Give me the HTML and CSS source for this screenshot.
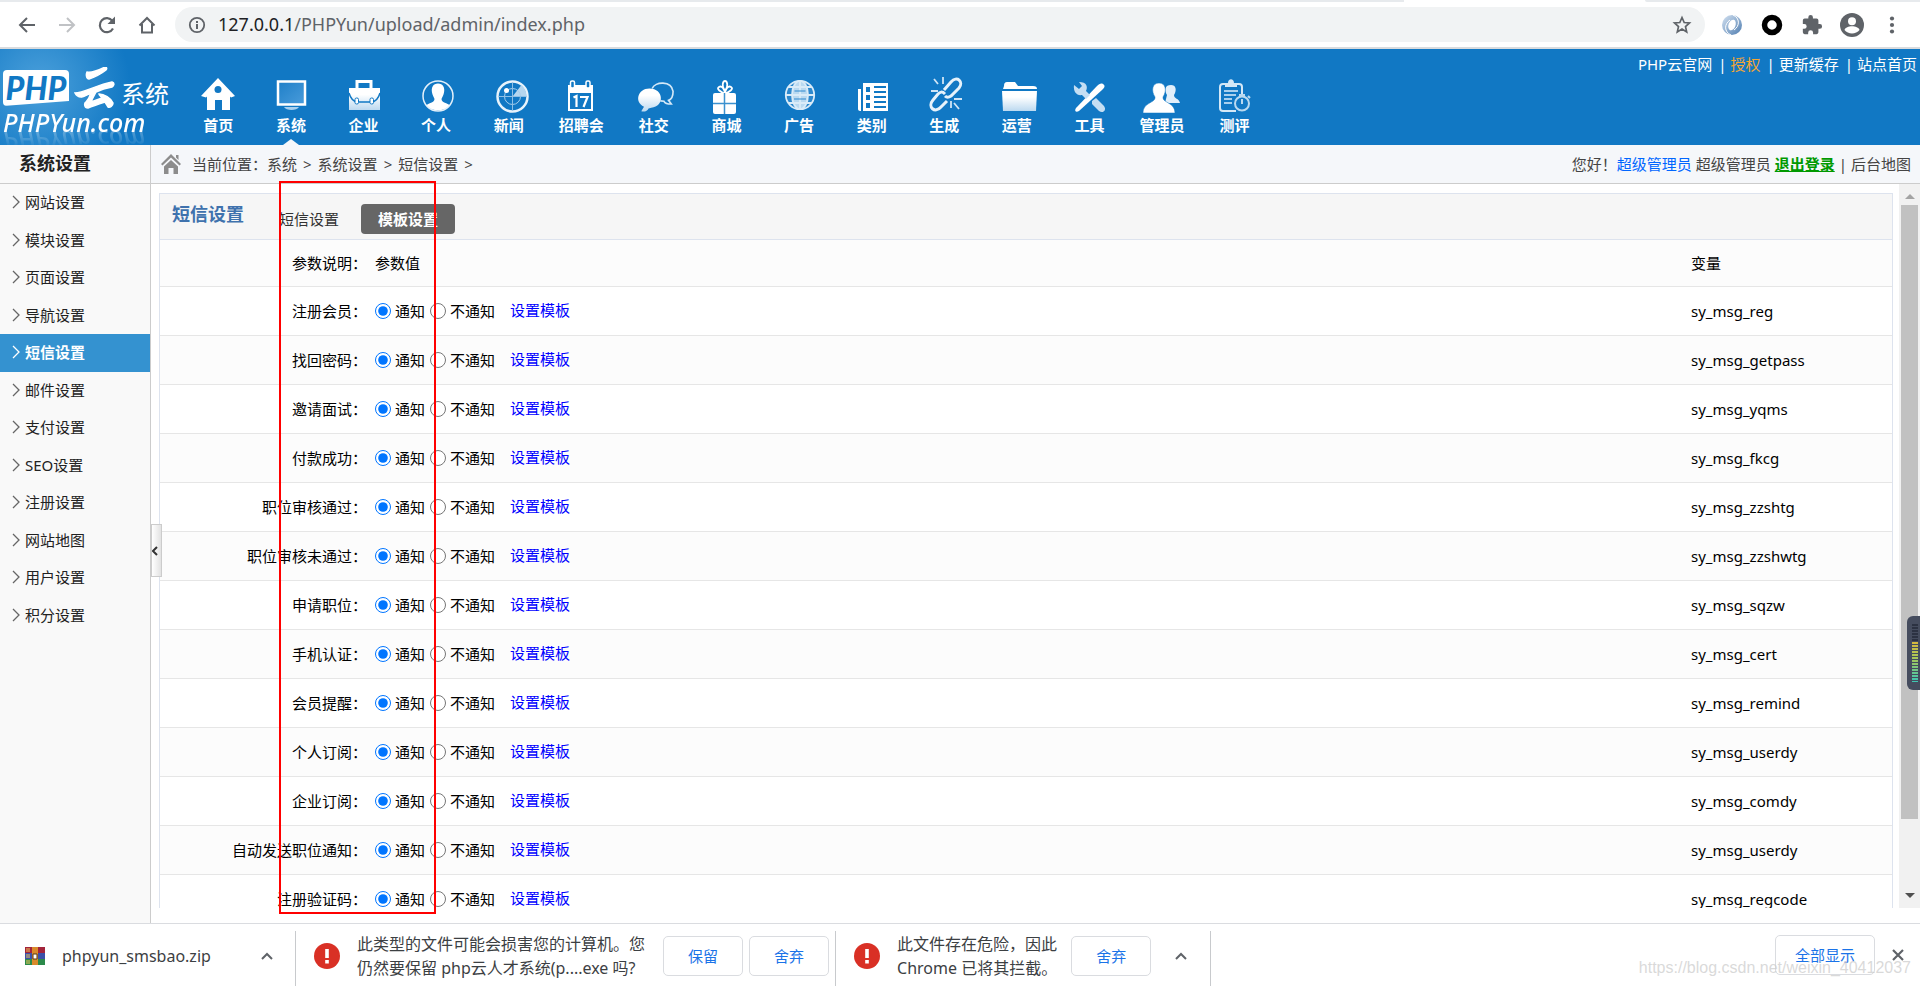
FILE: index.html
```html
<!DOCTYPE html>
<html lang="zh-CN">
<head>
<meta charset="utf-8">
<title>PHPYun 后台管理</title>
<link rel="stylesheet" href="styles.css">
</head>
<body>
<svg class="defs" aria-hidden="true">
  <defs>
    <linearGradient id="fade" x1="0" y1="0" x2="0" y2="1"><stop offset="0.3" stop-color="#fff"/><stop offset="1" stop-color="#bcd9f0"/></linearGradient>
    <linearGradient id="screen" x1="0" y1="0" x2="1" y2="1"><stop offset="0" stop-color="#1e7fc8"/><stop offset="1" stop-color="#4a9cdb"/></linearGradient>
    <linearGradient id="ring" x1="0" y1="0" x2="1" y2="1"><stop offset="0" stop-color="#d5e3f2"/><stop offset="1" stop-color="#4f7db0"/></linearGradient>
    <symbol id="warn" viewBox="0 0 26 26"><circle cx="13" cy="13" r="13" fill="#d93025"/><path d="M11.2 6h3.6v9h-3.6zM11.2 17h3.6v3.4h-3.6z" fill="#fff"/></symbol>
    <symbol id="up" viewBox="0 0 12 8"><path d="M1 7l5-5 5 5" fill="none" stroke="#5f6368" stroke-width="2"/></symbol>
    <symbol id="arrow" viewBox="0 0 8 14"><path d="M1 1l6 6-6 6" fill="none" stroke="currentColor" stroke-width="1.3"/></symbol>
  </defs>
</svg>

<div class="tabstrip"><span class="tab-left"></span><span class="tab-active"></span><span class="tab-right"></span></div>
<div class="toolbar">
  <button class="tool" aria-label="后退"><svg width="20" height="20" viewBox="0 0 20 20"><path d="M18 10H3M10 3l-7 7 7 7" fill="none" stroke="#5f6368" stroke-width="2"/></svg></button>
  <button class="tool" aria-label="前进"><svg width="20" height="20" viewBox="0 0 20 20"><path d="M2 10h15M10 3l7 7-7 7" fill="none" stroke="#c0c2c5" stroke-width="2"/></svg></button>
  <button class="tool" aria-label="刷新"><svg width="20" height="20" viewBox="0 0 20 20"><path d="M16 13.5a7 7 0 1 1-.6-7.6" fill="none" stroke="#5f6368" stroke-width="2.2"/><path d="M18 1.500v7.500h-7.500z" fill="#5f6368"/></svg></button>
  <button class="tool" aria-label="主页"><svg width="20" height="20" viewBox="0 0 20 20"><path d="M2.500 10.500L10 3l7.500 7.500M5 9v8.500h10V9" fill="none" stroke="#5f6368" stroke-width="2"/></svg></button>
  <div class="omnibox">
    <svg width="18" height="18" viewBox="0 0 18 18"><circle cx="9" cy="9" r="7.200" fill="none" stroke="#5f6368" stroke-width="1.800"/><path d="M8 8h2v5H8zM8 5h2v2H8z" fill="#5f6368"/></svg>
    <span class="url"><b>127.0.0.1</b>/PHPYun/upload/admin/index.php</span>
    <svg class="star" width="20" height="20" viewBox="0 0 20 20"><path d="M10 2.500l2.200 5 5.300.5-4 3.600 1.200 5.300L10 14.100l-4.700 2.800 1.200-5.300-4-3.600 5.300-.5z" fill="none" stroke="#5f6368" stroke-width="1.700"/></svg>
  </div>
  <button class="tool" aria-label="扩展一"><svg width="22" height="22" viewBox="0 0 22 22"><circle cx="11" cy="11" r="10" fill="url(#ring)"/><ellipse cx="11" cy="11" rx="3.500" ry="5.500" fill="#fff" transform="rotate(20 11 11)"/><path d="M12 1c7 3 7 11 1 15M10 21C3 18 3 10 9 6" stroke="#fff" fill="none"/></svg></button>
  <button class="tool" aria-label="扩展二"><svg width="22" height="22" viewBox="0 0 22 22"><circle cx="11" cy="11" r="7.500" fill="none" stroke="#000" stroke-width="5.500"/></svg></button>
  <button class="tool" aria-label="扩展程序"><svg width="22" height="22" viewBox="0 0 24 24"><path fill="#5f6368" d="M20.500 11H19V7a2 2 0 0 0-2-2h-4V3.500a2.500 2.500 0 0 0-5 0V5H4a2 2 0 0 0-2 2v3.800h1.500a2.700 2.700 0 0 1 0 5.400H2V20a2 2 0 0 0 2 2h3.800v-1.500a2.700 2.700 0 0 1 5.400 0V22H17a2 2 0 0 0 2-2v-4h1.500a2.500 2.500 0 0 0 0-5z"/></svg></button>
  <button class="tool" aria-label="用户"><svg width="24" height="24" viewBox="0 0 24 24"><circle cx="12" cy="12" r="12" fill="#5f6368"/><circle cx="12" cy="8.200" r="4" fill="#fff"/><path d="M4.500 17c1.500-5 13.500-5 15 0-3.500 4.500-11.500 4.500-15 0z" fill="#fff"/></svg></button>
  <button class="tool" aria-label="菜单"><svg width="6" height="18" viewBox="0 0 6 18" fill="#5f6368"><circle cx="3" cy="2.500" r="2.100"/><circle cx="3" cy="9" r="2.100"/><circle cx="3" cy="15.500" r="2.100"/></svg></button>
</div>

<header class="header">
  <a class="logo" href="#" aria-label="PHPYun">
    <span class="logo-row">
      <span class="logo-php">PHP</span>
      <svg width="42" height="42" viewBox="0 0 42 42"><path d="M13 5c5 1 12-2 18-5 2 0 2 2 1 3-5 4-11 7-17 9-3 0-3-5-2-7zM1 26c8 0 22-8 37-11 3 1 2 4 0 5-6 1-12 3-16 5-2 4-4 7-5 10l11-4c-1-2-3-3-3-4 5 0 12 4 14 9 0 3-3 5-5 4l-3-5c-6 2-12 4-17 6-4 0-4-5-2-6 3-3 4-6 5-9-5 2-8 5-10 4-3 0-5-2-6-4z" fill="#fff" stroke="#fff" stroke-width="1.500"/></svg>
      <span class="logo-sys">系统</span>
    </span>
    <span class="logo-name">PHPYun.com</span>
  </a>
  <nav class="nav">
    <a href="#"><svg viewBox="0 0 40 40"><path d="M20 4l17 18-4 1.500-1-1V36h-8V26h-7v10H9V22.500l-1 1L3 22z" fill="#fff"/><circle cx="20" cy="15.500" r="3.500" fill="#1178c4"/></svg>首页</a>
    <a href="#" class="current"><svg viewBox="0 0 40 40"><rect x="7" y="7.500" width="27" height="23" fill="url(#screen)" stroke="#fff" stroke-width="2.500"/><path d="M13 33h15c-2 4-13 4-15 0z" fill="#a8d0ef"/></svg>系统</a>
    <a href="#"><svg viewBox="0 0 40 40"><path d="M14 14V7.500h14V14" fill="none" stroke="#fff" stroke-width="3"/><path d="M6 14h31v22H6z" fill="url(#fade)"/><path d="M6 19c2 7 5 9 9 9M37 19c-2 7-5 9-9 9M15 28h13" fill="none" stroke="#1178c4" stroke-width="1.500"/><rect x="12" y="24" width="3.500" height="6" rx="1.500" fill="#fff" stroke="#1178c4"/><rect x="27" y="24" width="3.500" height="6" rx="1.500" fill="#fff" stroke="#1178c4"/></svg>企业</a>
    <a href="#"><svg viewBox="0 0 40 40"><circle cx="22" cy="22" r="15" fill="none" stroke="#e3f0fa" stroke-width="1.500"/><path d="M22 9.500c5 0 7 4 6 9-.4 3-2 5-2.500 6.500.5 3.500 3 3 8 6-5 7-18 7-23 0 5-3 7.500-2.500 8-6-.5-1.500-2-3.500-2.500-6.500-1-5 1-9 6-9z" fill="#fff"/></svg>个人</a>
    <a href="#"><svg viewBox="0 0 40 40"><circle cx="23.500" cy="22.500" r="15" fill="none" stroke="#e8f3fb" stroke-width="2.500"/><path d="M23.500 22.500L32.500 11a15 15 0 0 1 5 11.500z" fill="#b5d6ef"/><circle cx="23.500" cy="22.500" r="8" fill="none" stroke="#a5cdec"/><path d="M23.500 8.500v28M9.500 22.500h28" stroke="#8ec0e6"/><circle cx="17.500" cy="16.500" r="2.500" fill="#fff"/></svg>新闻</a>
    <a href="#"><svg viewBox="0 0 40 40"><rect x="7" y="11" width="25" height="26" fill="#fff"/><path d="M9 19h21v16H9z" fill="#1178c4"/><rect x="9.500" y="7" width="4" height="7" rx="1.500" fill="#1178c4" stroke="#fff" stroke-width="1.500"/><rect x="25" y="7" width="4" height="7" rx="1.500" fill="#1178c4" stroke="#fff" stroke-width="1.500"/><path d="M12.500 23.500l3-1.500v11M19 23h7.500l-4 10" fill="none" stroke="#fff" stroke-width="2.200"/></svg>招聘会</a>
    <a href="#"><svg viewBox="0 0 44 40"><path d="M20 14C23 6 41 5 43 17c0 5-2 9-5 10l3 4c-4 0-7-1-8-3l-4-.5" fill="none" stroke="#d4e8f7" stroke-width="1.800"/><path d="M17 14c16 0 17 20 2 21l-3 1c-1 3-5 4-8 3l3-5C0 29 4 14 17 14z" fill="url(#fade)"/></svg>社交</a>
    <a href="#"><svg viewBox="0 0 40 40"><path d="M19 20c-5-3-9-5-6-7s6 3 6 7c0-4 3-9 6-7s-1 4-6 7zM19 17c-4-5-2-10 0-10s4 5 0 10z" fill="none" stroke="#fff" stroke-width="1.800"/><rect x="7" y="19" width="23" height="21" rx="2" fill="#fff"/><path d="M18.500 19v21M7 29.500h23" stroke="#3b91cf" stroke-width="1.500"/></svg>商城</a>
    <a href="#"><svg viewBox="0 0 40 40"><g transform="translate(1 1)" fill="#2d88cd" stroke="#d9ebf8" stroke-width="1.800"><circle cx="20" cy="20" r="14.200"/><ellipse cx="20" cy="20" rx="8" ry="14.200" fill="#b9d9f0"/><path d="M20 5.500v29M5.500 20h29M8 12h24M8 28h24" fill="none"/><path d="M14.500 16h11M14 24h12" stroke="#2d88cd" stroke-width="1.200"/></g></svg>广告</a>
    <a href="#"><svg viewBox="0 0 40 40"><path d="M6 15h3v22H8c-1 0-2-1-2-2zM11 9h25v28H11z" fill="#fff"/><path d="M14 13h4v5h-4zM14 21h4v5h-4zM14 29h4v5h-4zM22 12h12v2H22zM22 17h12v2H22zM22 22h12v2H22zM22 27h12v2H22zM22 32h12v2H22z" fill="#1178c4"/></svg>类别</a>
    <a href="#"><svg viewBox="0 0 40 40"><g transform="translate(2 1)"><path d="M18 15l7-8c6-7 13 0 8 6l-8 8c-3 2-5 1-6 0M19 19c-3-3-5-2-7 0l-5 6c-6 7 2 14 8 7l6-6" fill="none" stroke="#e6f2fb" stroke-width="3"/><path d="M8 4l4 5M17 2v7M5 16h7M25 26v7M28 24h8M28 28l5 6" stroke="#d0e5f6" stroke-width="1.800"/></g></svg>生成</a>
    <a href="#"><svg viewBox="0 0 40 40"><path d="M7 12c0-3 1-4 3-4h8l3 4h15c3 0 4 1 4 3H6z" fill="#fff"/><path d="M5 17h35l-1 20H6z" fill="url(#fade)"/></svg>运营</a>
    <a href="#"><svg viewBox="0 0 40 40"><path d="M34 10c3 2 1 4-1 6L10 37c-3 2-5 0-3-3L28 12c2-2 4-3 6-2z" fill="#fff"/><path d="M5 11l5 4 3-3-3-4c8 0 9 5 7 9l4 4-4 4-4-4c-5 1-9-3-8-10zM23 27l4-3 8 8c3 4-1 8-5 5l-7-7z" fill="#c4def3"/></svg>工具</a>
    <a href="#"><svg viewBox="0 0 40 40"><path d="M29 11c5 0 6 5 3 10 0 4 5 3 6 8H23l2-8c-3-5-2-10 4-10z" fill="#e2effa"/><path d="M17 9c7 0 8 8 4 14-1 6 12 5 12 16H1c0-11 13-10 12-16-4-6-3-14 4-14z" fill="#fff" stroke="#1178c4" stroke-width="0.500"/></svg>管理员</a>
    <a href="#"><svg viewBox="0 0 40 40"><path d="M10 10H8c-2 0-3 1-3 3v21c0 2 1 3 3 3h13M22 10h2c2 0 3 1 3 3v7" fill="none" stroke="#d4e8f7" stroke-width="2"/><path d="M10 13V9h3c0-5 6-5 6 0h3v4z" fill="#d4e8f7"/><path d="M9 17h14M9 21h12M9 25h8M9 29h8" stroke="#a9d0ee" stroke-width="1.800"/><circle cx="27" cy="29.500" r="7" fill="#1178c4" stroke="#b9d9f0" stroke-width="2"/><path d="M27 25v5M24 21h6M33 22l2 2" stroke="#b9d9f0" stroke-width="2"/></svg>测评</a>
  </nav>
  <div class="toplinks"><a href="#">PHP云官网</a><i>|</i><a href="#" class="gold">授权</a><i>|</i><a href="#">更新缓存</a><i>|</i><a href="#">站点首页</a></div>
</header>

<div class="body">
  <aside class="sidebar">
    <h2>系统设置</h2>
    <nav class="menu">
      <a href="#"><svg><use href="#arrow"/></svg>网站设置</a>
      <a href="#"><svg><use href="#arrow"/></svg>模块设置</a>
      <a href="#"><svg><use href="#arrow"/></svg>页面设置</a>
      <a href="#"><svg><use href="#arrow"/></svg>导航设置</a>
      <a href="#" class="on"><svg><use href="#arrow"/></svg>短信设置</a>
      <a href="#"><svg><use href="#arrow"/></svg>邮件设置</a>
      <a href="#"><svg><use href="#arrow"/></svg>支付设置</a>
      <a href="#"><svg><use href="#arrow"/></svg>SEO设置</a>
      <a href="#"><svg><use href="#arrow"/></svg>注册设置</a>
      <a href="#"><svg><use href="#arrow"/></svg>网站地图</a>
      <a href="#"><svg><use href="#arrow"/></svg>用户设置</a>
      <a href="#"><svg><use href="#arrow"/></svg>积分设置</a>
    </nav>
  </aside>
  <main class="main">
    <div class="crumbs">
      <svg width="20" height="20" viewBox="0 0 20 20" fill="#8c8c8c"><path d="M10 0l10 10-1.500 1.500L10 3.500l-8.500 8L0 10zM15 1h2.500v5L15 3.500z"/><path d="M10 6l7 6.500V20h-4.500v-6h-5v6H3v-7.500z"/></svg>
      <div class="trail"><span>当前位置：系统</span><span>&gt;</span><span>系统设置</span><span>&gt;</span><span>短信设置</span><span>&gt;</span></div>
      <div class="account"><span>您好！</span><a href="#" class="who">超级管理员</a><span>超级管理员</span><a href="#" class="logout">退出登录</a><span>|</span><a href="#">后台地图</a></div>
    </div>
    <div class="frame">
      <section class="panel">
        <div class="panel-head"><h1>短信设置</h1><a href="#" class="tab">短信设置</a><a href="#" class="tab tab-on">模板设置</a></div>
        <table class="grid">
          <thead><tr><th class="name">参数说明：</th><th>参数值</th><th class="var">变量</th></tr></thead>
          <tbody>
            <tr><th class="name">注册会员：</th><td><div class="opts"><label><input type="radio" name="r1" checked>通知</label><label><input type="radio" name="r1">不通知</label><a href="#">设置模板</a></div></td><td>sy_msg_reg</td></tr>
            <tr><th class="name">找回密码：</th><td><div class="opts"><label><input type="radio" name="r2" checked>通知</label><label><input type="radio" name="r2">不通知</label><a href="#">设置模板</a></div></td><td>sy_msg_getpass</td></tr>
            <tr><th class="name">邀请面试：</th><td><div class="opts"><label><input type="radio" name="r3" checked>通知</label><label><input type="radio" name="r3">不通知</label><a href="#">设置模板</a></div></td><td>sy_msg_yqms</td></tr>
            <tr><th class="name">付款成功：</th><td><div class="opts"><label><input type="radio" name="r4" checked>通知</label><label><input type="radio" name="r4">不通知</label><a href="#">设置模板</a></div></td><td>sy_msg_fkcg</td></tr>
            <tr><th class="name">职位审核通过：</th><td><div class="opts"><label><input type="radio" name="r5" checked>通知</label><label><input type="radio" name="r5">不通知</label><a href="#">设置模板</a></div></td><td>sy_msg_zzshtg</td></tr>
            <tr><th class="name">职位审核未通过：</th><td><div class="opts"><label><input type="radio" name="r6" checked>通知</label><label><input type="radio" name="r6">不通知</label><a href="#">设置模板</a></div></td><td>sy_msg_zzshwtg</td></tr>
            <tr><th class="name">申请职位：</th><td><div class="opts"><label><input type="radio" name="r7" checked>通知</label><label><input type="radio" name="r7">不通知</label><a href="#">设置模板</a></div></td><td>sy_msg_sqzw</td></tr>
            <tr><th class="name">手机认证：</th><td><div class="opts"><label><input type="radio" name="r8" checked>通知</label><label><input type="radio" name="r8">不通知</label><a href="#">设置模板</a></div></td><td>sy_msg_cert</td></tr>
            <tr><th class="name">会员提醒：</th><td><div class="opts"><label><input type="radio" name="r9" checked>通知</label><label><input type="radio" name="r9">不通知</label><a href="#">设置模板</a></div></td><td>sy_msg_remind</td></tr>
            <tr><th class="name">个人订阅：</th><td><div class="opts"><label><input type="radio" name="r10" checked>通知</label><label><input type="radio" name="r10">不通知</label><a href="#">设置模板</a></div></td><td>sy_msg_userdy</td></tr>
            <tr><th class="name">企业订阅：</th><td><div class="opts"><label><input type="radio" name="r11" checked>通知</label><label><input type="radio" name="r11">不通知</label><a href="#">设置模板</a></div></td><td>sy_msg_comdy</td></tr>
            <tr><th class="name">自动发送职位通知：</th><td><div class="opts"><label><input type="radio" name="r12" checked>通知</label><label><input type="radio" name="r12">不通知</label><a href="#">设置模板</a></div></td><td>sy_msg_userdy</td></tr>
            <tr><th class="name">注册验证码：</th><td><div class="opts"><label><input type="radio" name="r13" checked>通知</label><label><input type="radio" name="r13">不通知</label><a href="#">设置模板</a></div></td><td>sy_msg_regcode</td></tr>
          </tbody>
        </table>
      </section>
      <div class="scrollbar">
        <svg width="10" height="6" viewBox="0 0 10 6"><path d="M0 6l5-5 5 5z" fill="#a3a3a3"/></svg>
        <div class="track"><div class="thumb"></div></div>
        <svg width="10" height="6" viewBox="0 0 10 6"><path d="M0 0l5 5 5-5z" fill="#505050"/></svg>
      </div>
    </div>
    <button class="collapse" aria-label="收起侧栏"><svg width="6" height="10" viewBox="0 0 6 10"><path d="M5 1L1 5l4 4" fill="none" stroke="#333" stroke-width="2"/></svg></button>
  </main>
</div>

<footer class="downloads">
  <div class="item file">
    <svg width="20" height="18" viewBox="0 0 20 18"><path d="M0 0h20v6H0z" fill="#a3243b"/><path d="M0 6h20v6H0z" fill="#3c4fa8"/><path d="M0 12h20v6H0z" fill="#2b8a4a"/><path d="M2 1v4M2 7v4M2 13v4M4 1v4M4 7v4M4 13v4" stroke="#f0c75a"/><path d="M7 0h6v18H7z" fill="#d98a2b"/><path d="M8 7h4v5H8z" fill="#fff" stroke="#5a3a10"/></svg>
    <span class="fname">phpyun_smsbao.zip</span>
    <button class="chev" aria-label="更多"><svg width="12" height="8"><use href="#up"/></svg></button>
  </div>
  <div class="item">
    <svg width="26" height="26"><use href="#warn"/></svg>
    <p>此类型的文件可能会损害您的计算机。您<br>仍然要保留 php云人才系统(p....exe 吗?</p>
    <button class="btn">保留</button><button class="btn">舍弃</button>
  </div>
  <div class="item blocked">
    <svg width="26" height="26"><use href="#warn"/></svg>
    <p>此文件存在危险，因此<br>Chrome 已将其拦截。</p>
    <button class="btn">舍弃</button>
    <button class="chev" aria-label="更多"><svg width="12" height="8"><use href="#up"/></svg></button>
  </div>
  <div class="all">
    <button class="btn wide">全部显示</button>
    <button class="chev" aria-label="关闭"><svg width="12" height="12" viewBox="0 0 12 12"><path d="M1 1l10 10M11 1L1 11" stroke="#5f6368" stroke-width="2.200"/></svg></button>
  </div>
</footer>

<div class="mark"></div>
<div class="meter"><span></span></div>
<div class="watermark">https://blog.csdn.net/weixin_40412037</div>
</body>
</html>
```

FILE: styles.css
```css
* { box-sizing: border-box; }
body {
  margin: 0;
  height: 100vh;
  display: flex;
  flex-direction: column;
  position: relative;
  overflow: hidden;
  background: #fff;
  color: #000;
  font: 15px/20px "Noto Sans", "Noto Sans CJK SC", sans-serif;
}
a { color: inherit; text-decoration: none; }
button { font: inherit; padding: 0; border: 0; background: none; }
h1, h2, p { margin: 0; }
svg { display: block; flex: none; }
.defs { position: absolute; width: 0; height: 0; }

/* browser chrome */
.tabstrip { flex: none; display: flex; height: 2px; }
.tab-left { flex: 1404; background: #e7eaed; }
.tab-active { flex: 241; }
.tab-right { flex: 275; background: #e7eaed; border-bottom-left-radius: 4px; }
.toolbar {
  flex: none;
  display: flex;
  align-items: center;
  height: 47px;
  padding: 0 8px 0 7px;
  border-bottom: 2px solid #d9dbde;
}
.tool { flex: none; width: 40px; height: 40px; display: flex; align-items: center; justify-content: center; }
.omnibox {
  flex: 1;
  display: flex;
  align-items: center;
  gap: 12px;
  height: 35px;
  margin: 0 7px 0 8px;
  padding: 0 13px;
  border-radius: 18px;
  background: #f1f3f4;
}
.url { flex: 1; padding-bottom: 2px; font-size: 18px; line-height: 24px; color: #5f6368; }
.url b { font-weight: 400; color: #202124; }

/* header */
.header {
  flex: none;
  display: flex;
  position: relative;
  height: 96px;
  overflow: hidden;
  background: radial-gradient(circle at 40px 36px, #4ba0db 0, #1178c4 90px) #1178c4;
  color: #fff;
}
.logo { flex: none; width: 182px; padding: 18px 0 0 3px; }
.logo-row { display: flex; align-items: center; gap: 5px; height: 42px; }
.logo-php {
  width: 66px;
  height: 36px;
  border-radius: 4px;
  background: #fff;
  color: #1178c4;
  font: italic 900 32px/36px Lato, sans-serif;
  text-align: center;
  clip-path: polygon(0 0, 100% 0, 100% 86%, 0 100%);
}
.logo-sys { font-size: 24px; line-height: 24px; padding-top: 12px; }
.logo-name {
  display: block;
  font: italic 500 25px/26px "Noto Sans", sans-serif;
  -webkit-box-reflect: below -8px linear-gradient(transparent 20%, rgba(255, 255, 255, 0.35));
}
.nav { flex: none; width: 1089px; display: flex; }
.nav a {
  flex: 1 1 0;
  position: relative;
  display: flex;
  flex-direction: column;
  align-items: center;
  padding-top: 25px;
  font-weight: 700;
  white-space: nowrap;
}
.nav svg { width: 40px; height: 40px; margin-bottom: 1px; }
.nav .current::after {
  content: "";
  position: absolute;
  bottom: 0;
  border: 8px solid transparent;
  border-width: 0 8px 6px;
  border-bottom-color: #f5f7fa;
}
.toplinks { margin-left: auto; padding: 5px 3px 0 0; display: flex; gap: 4px; white-space: nowrap; }
.toplinks i { font-style: normal; padding-left: 2px; }
.gold { color: #f5a632; }

/* sidebar */
.body { flex: 1; min-height: 0; display: flex; }
.sidebar { flex: none; width: 151px; background: #f9f9f9; border-right: 1px solid #ccc; }
.sidebar h2 {
  height: 39px;
  padding-left: 19px;
  border-bottom: 1px solid #ccc;
  font-size: 18px;
  line-height: 36px;
  color: #222;
}
.menu a { display: flex; align-items: center; gap: 5px; height: 37px; padding: 0 0 2px 12px; color: #222; }
.menu a:nth-child(odd) { height: 38px; }
.menu svg { width: 8px; height: 14px; color: #666; }
.menu .on { background: #3492d0; color: #fff; font-weight: 700; }
.menu .on svg { color: #fff; }

/* main */
.main { flex: 1; min-width: 0; position: relative; display: flex; flex-direction: column; padding-bottom: 15px; }
.crumbs {
  flex: none;
  display: flex;
  align-items: center;
  gap: 11px;
  height: 39px;
  padding: 0 9px 1px 10px;
  background: #f5f7fa;
  border-bottom: 1px solid #ccc;
  color: #444;
}
.trail { display: flex; gap: 6px; }
.account { margin-left: auto; display: flex; gap: 4px; }
.account span:first-child { margin-right: -4px; }
.who { color: #0066ff; }
.logout { color: #090; font-weight: 700; text-decoration: underline; }
.frame { flex: 1; min-height: 0; display: flex; overflow: hidden; }
.panel { flex: 1; height: max-content; margin: 9px 6px 0 8px; border: 1px solid #dde3ee; }
.panel-head {
  display: flex;
  align-items: center;
  height: 46px;
  padding-left: 12px;
  background: #f6f6f6;
  border-bottom: 1px solid #dde3ee;
}
.panel-head h1 { font-size: 18px; line-height: 24px; color: #3f72ad; padding-bottom: 6px; }
.tab { height: 30px; margin-top: 5px; line-height: 30px; margin-left: 35px; color: #333; }
.tab-on { margin-left: 22px; padding: 0 17px; border-radius: 4px; background: #666; color: #fff; font-weight: 700; }
.grid { width: 100%; table-layout: fixed; border-spacing: 0; }
.grid th, .grid td {
  height: 49px;
  padding: 0 8px;
  border-bottom: 1px solid #e6e6e6;
  text-align: left;
  font-weight: 400;
}
.grid thead th { height: 47px; background: #fcfcfc; }
.grid .name { width: 207px; padding: 0; text-align: right; }
.grid .var { width: 209px; }
.grid tbody tr:nth-child(even) { background: #fcfcfc; }
.opts { display: flex; align-items: center; gap: 5px; }
.opts label { display: flex; align-items: center; gap: 4px; }
.opts input { width: 16px; height: 16px; margin: 0; accent-color: #0075ff; }
.opts a { margin-left: 10px; padding-bottom: 2px; color: #00f; }
.scrollbar { flex: none; width: 21px; display: flex; flex-direction: column; align-items: center; padding: 9px 0; background: #f1f1f1; }
.track { flex: 1; width: 17px; margin: 6px 0; }
.thumb { height: 90%; background: #c1c1c1; }
.collapse {
  position: absolute;
  left: 0;
  top: calc(50% - 10px);
  width: 11px;
  height: 53px;
  display: flex;
  align-items: center;
  border: 1px solid #ccc;
  background: linear-gradient(90deg, #fff, #e2e2e2);
}

/* downloads bar */
.downloads { flex: none; display: flex; height: 63px; padding-top: 7px; border-top: 1px solid #dadce0; color: #3c4043; white-space: nowrap; }
.item { display: flex; align-items: center; padding: 0 6px 6px 18px; border-right: 1px solid #c8cacd; }
.item p { margin: 0 18px 0 17px; font-size: 16px; line-height: 24px; }
.file { width: 296px; padding: 0 20px 6px 25px; }
.fname { flex: 1; padding-left: 17px; font-size: 16px; }
.chev { display: flex; align-items: center; justify-content: center; width: 16px; height: 40px; }
.blocked p { margin-right: 14px; }
.blocked .chev { margin: 0 15px 0 22px; }
.btn { width: 80px; height: 40px; border: 1px solid #dadce0; border-radius: 5px; color: #1a73e8; }
.btn + .btn { margin-left: 6px; }
.all { margin-left: auto; display: flex; align-items: center; gap: 15px; padding: 0 14px 7px 0; }
.wide { width: 100px; }

/* overlays */
.mark { position: absolute; left: 279px; top: 181px; width: 157px; height: 733px; border: 2px solid #f00; }
.meter { position: absolute; right: 0; top: 616px; width: 13px; height: 74px; padding: 8px 2px 8px 5px; border-radius: 6px 0 0 6px; background: #454c5e; }
.meter span {
  display: block;
  height: 58px;
  background:
    repeating-linear-gradient(transparent 0 2px, #454c5e 2px 3px),
    linear-gradient(#2c3242 30%, #d8b83c 30%, #a5c85a 60%, #3cc8b4);
}
.watermark {
  position: absolute;
  right: 9px;
  bottom: 8px;
  font: 16px/20px "Liberation Sans", sans-serif;
  color: rgba(205, 205, 205, 0.75);
  pointer-events: none;
}
```
